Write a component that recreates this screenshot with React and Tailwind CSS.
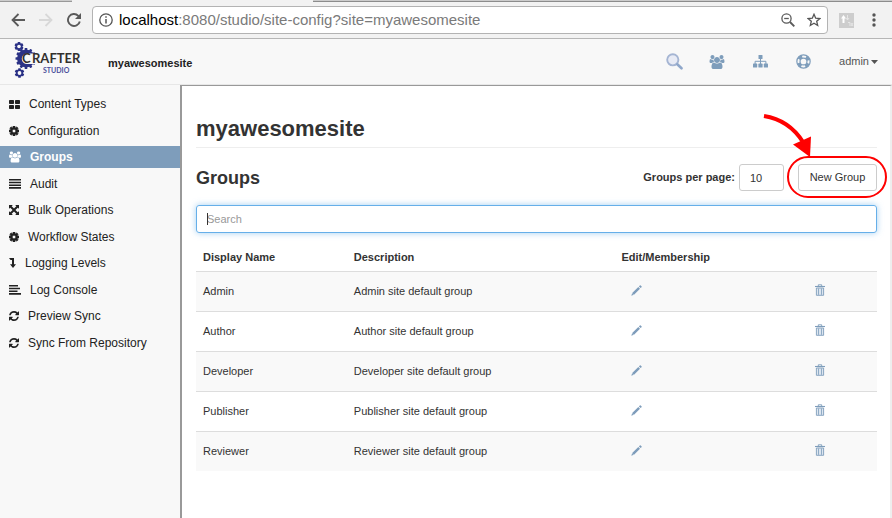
import React from 'react';

const USERS =
  'M657 896q-162 5-265 128h-134q-82 0-138-40.5t-56-118.5q0-353 124-353 6 0 43.5 21t97.5 42.5 119 21.5q67 0 133-23-5 37-5 66 0 139 81 256zm1071 637q0 120-73 189.5t-194 69.5h-874q-121 0-194-69.5t-73-189.5q0-53 3.5-103.5t14-109 26.5-108.5 43-97.5 62-81 85.5-53.5 111.5-20q10 0 43 21.5t73 48 107 48 135 21.5 135-21.5 107-48 73-48 43-21.5q61 0 111.5 20t85.5 53.5 62 81 43 97.5 26.5 108.5 14 109 3.5 103.5zm-1024-1277q0 106-75 181t-181 75-181-75-75-181 75-181 181-75 181 75 75 181zm704 384q0 159-112.5 271.5t-271.5 112.5-271.5-112.5-112.5-271.5 112.5-271.5 271.5-112.5 271.5 112.5 112.5 271.5zm576 225q0 78-56 118.5t-138 40.5h-134q-103-123-265-128 81-117 81-256 0-29-5-66 66 23 133 23 59 0 119-21.5t97.5-42.5 43.5-21q124 0 124 353zm-128-609q0 106-75 181t-181 75-181-75-75-181 75-181 181-75 181 75 75 181z';
const REFRESH =
  'M1511 928q0 5-1 7-64 268-268 434.5t-478 166.5q-146 0-282.5-55t-243.5-157l-129 129q-19 19-45 19t-45-19-19-45v-448q0-26 19-45t45-19h448q26 0 45 19t19 45-19 45l-137 137q71 66 161 102t187 36q134 0 250-65t186-179q11-17 53-117 8-23 30-23h192q13 0 22.5 9.5t9.5 22.5zm25-800v448q0 26-19 45t-45 19h-448q-26 0-45-19t-19-45 19-45l138-138q-148-137-349-137-134 0-250 65t-186 179q-11 17-53 117-8 23-30 23h-199q-13 0-22.5-9.5t-9.5-22.5v-7q65-268 270-434.5t480-166.5q146 0 284 55.5t245 156.5l130-129q19-19 45-19t45 19 19 45z';
const COG =
  'M1024 640q0-106-75-181t-181-75-181 75-75 181 75 181 181 75 181-75 75-181zm512-109v222q0 12-8 23t-20 13l-185 28q-19 54-39 91 35 50 107 138 10 12 10 25t-9 23q-27 37-99 108t-94 71q-12 0-26-9l-138-108q-44 23-91 38-16 136-29 186-7 28-36 28h-222q-14 0-24.5-8.5t-11.5-21.5l-28-184q-49-16-90-37l-141 107q-10 9-25 9-14 0-25-11-126-114-165-168-7-10-7-23 0-12 8-23 15-21 51-66.5t54-70.5q-27-50-41-99l-183-27q-13-2-21-12.5t-8-23.5v-222q0-12 8-23t19-13l186-28q14-46 39-92-40-57-107-138-10-12-10-24 0-10 9-23 26-36 98.5-107.5t94.500-71.500q13 0 26 10l138 107q44-23 91-38 16-136 29-186 7-28 36-28h222q14 0 24.5 8.5t11.5 21.5l28 184q49 16 90 37l142-107q9-9 24-9 13 0 25 10 129 119 165 170 7 8 7 22 0 12-8 23-15 21-51 66.5t-54 70.5q26 50 41 98l183 28q13 2 21 12.5t8 23.5z';

const Users = ({ className }) => (
  <svg viewBox="64 0 1920 1792" className={className} fill="currentColor" aria-hidden="true"><path d={USERS} /></svg>
);
const Refresh = ({ className }) => (
  <svg viewBox="0 0 1536 1536" className={className} fill="currentColor" aria-hidden="true"><path d={REFRESH} /></svg>
);
const Cog = ({ className }) => (
  <svg viewBox="0 -128 1536 1536" className={className} fill="currentColor" stroke="currentColor" strokeWidth="90" aria-hidden="true"><path d={COG} /></svg>
);
const ThLarge = ({ className }) => (
  <svg viewBox="0 0 11 9" className={className} fill="currentColor" aria-hidden="true">
    <rect width="5" height="4" rx="0.7" /><rect x="6" width="5" height="4" rx="0.7" />
    <rect y="5" width="5" height="4" rx="0.7" /><rect x="6" y="5" width="5" height="4" rx="0.7" />
  </svg>
);
const Justify = ({ className }) => (
  <svg viewBox="0 0 12 11" className={className} fill="currentColor" aria-hidden="true">
    <path d="M0 1h12v1.6H0zM0 3.7h12v1.6H0zM0 6.4h12V8H0zM0 9.1h12v1.6H0z" />
  </svg>
);
const AlignLeft = ({ className }) => (
  <svg viewBox="0 0 12 11" className={className} fill="currentColor" aria-hidden="true">
    <path d="M0 1h9v1.6H0zM0 3.7h11v1.6H0zM0 6.4h8.5V8H0zM0 9.1h12v1.6H0z" />
  </svg>
);
const Expand = ({ className }) => (
  <svg viewBox="0 0 12 12" className={className} fill="currentColor" aria-hidden="true">
    <path d="M0 0h4.6L3.2 1.5 6 4.3l2.8-2.8L7.400 0H12v4.600l-1.500-1.400L7.700 6l2.800 2.800L12 7.400V12H7.400l1.400-1.500L6 7.700l-2.800 2.800L4.600 12H0V7.400l1.500 1.400L4.300 6 1.500 3.200 0 4.600z" />
  </svg>
);
const LevelDown = ({ className }) => (
  <svg viewBox="0 0 7 10" className={className} fill="currentColor" aria-hidden="true">
    <path d="M0 0h5v6.200h2L4 10 1 6.200h2V2H1.500z" />
  </svg>
);
const Sitemap = ({ className }) => (
  <svg viewBox="0 0 15 13" className={className} fill="currentColor" aria-hidden="true">
    <rect x="5.5" y="0" width="4" height="4" rx="0.6" />
    <rect x="0" y="8.6" width="4.2" height="4" rx="0.6" />
    <rect x="5.4" y="8.6" width="4.2" height="4" rx="0.6" />
    <rect x="10.8" y="8.6" width="4.2" height="4" rx="0.6" />
    <path d="M7.500 3.500v5.500M2.100 9V6.300h10.800V9" fill="none" stroke="currentColor" strokeWidth="1" />
  </svg>
);
const LifeRing = ({ className }) => (
  <svg viewBox="0 0 16 16" className={className} fill="none" stroke="currentColor" aria-hidden="true">
    <circle cx="8" cy="8" r="7.1" strokeWidth="1.3" />
    <circle cx="8" cy="8" r="3.7" strokeWidth="1.3" />
    <circle cx="8" cy="8" r="5.4" strokeWidth="3.2" strokeDasharray="4.24 4.24" strokeDashoffset="-2.12" />
  </svg>
);
const Magnifier = ({ className }) => (
  <svg viewBox="0 0 17 17" className={className} fill="none" aria-hidden="true">
    <circle cx="6.8" cy="6.8" r="5.6" strokeWidth="1.9" stroke="#a5b5d3" fill="#e8ebf5" />
    <path d="M11.300 11.300l4.200 4" stroke="#8fa7ca" strokeWidth="2.6" strokeLinecap="round" />
  </svg>
);
const Pencil = ({ className }) => (
  <svg viewBox="0 0 11 11" className={className} fill="currentColor" aria-hidden="true">
    <path d="M0.300 10.700l.9-2.700L7.300 2l1.700 1.700L3 9.800zM7.900 1.400l.9-.9q.4-.4.900 0l.8.8q.5.500 0 1l-.9.800z" />
    <path d="M1.200 8.300l1.500 1.500" stroke="white" strokeWidth="0.5" />
  </svg>
);
const Trash = ({ className }) => (
  <svg viewBox="0 0 10 12" className={className} fill="none" stroke="currentColor" aria-hidden="true">
    <path d="M0 2.500h10" strokeWidth="1.1" />
    <path d="M3.300 2.300V.8h3.400v1.500" strokeWidth="0.9" />
    <path d="M1.400 4h7.200v7.300H1.400z" fill="#dce5ef" strokeWidth="0.9" />
    <path d="M3.500 4.500v6.300M6.500 4.500v6.300" strokeWidth="0.8" />
  </svg>
);

const gear = (cx, cy, r, teeth, w) =>
  Array.from({ length: teeth }, (_, i) => (
    <rect key={i} x={cx - w / 2} y={cy - r} width={w} height={r} rx="0.5" transform={`rotate(${(360 / teeth) * i} ${cx} ${cy})`} />
  ));

const Logo = () => (
  <svg viewBox="0 0 68 40" className="h-10 w-[68px]" role="img" aria-label="Crafter Studio">
    <g fill="#2b3286">
      {gear(12, 16.5, 10.5, 12, 2.6)}
      <circle cx="12" cy="16.5" r="9" />
      {gear(5, 4.5, 4.5, 6, 2.6)}
      <circle cx="5" cy="4.5" r="3.5" />
      {gear(5.5, 31, 4.8, 6, 2.6)}
      <circle cx="5.5" cy="31" r="3.7" />
    </g>
    <circle cx="5" cy="4.5" r="1.8" fill="#f8f8f8" />
    <circle cx="5.5" cy="31" r="1.9" fill="#f8f8f8" />
    <path d="M13 11.500h12V22H13a5.200 5.200 0 0 1 0-10.500z" fill="#f8f8f8" />
    <g fontWeight="700" fontFamily="Lato, sans-serif">
      <text x="8" y="21" fontSize="13" fill="#33302e">C</text>
      <text x="18" y="21" fontSize="13" fill="#33302e">RAFTER</text>
      <text x="29" y="31" fontSize="7" fill="#4b4f9b">STUDIO</text>
    </g>
  </svg>
);

const nav = [
  ['Content Types', ThLarge, 'h-[9px] w-[11px]'],
  ['Configuration', Cog, 'size-[10px]'],
  ['Groups', Users, 'h-3 w-3'],
  ['Audit', Justify, 'h-[11px] w-3'],
  ['Bulk Operations', Expand, 'size-[10px]'],
  ['Workflow States', Cog, 'size-[10px]'],
  ['Logging Levels', LevelDown, 'h-[10px] w-[7px]'],
  ['Log Console', AlignLeft, 'h-[11px] w-3'],
  ['Preview Sync', Refresh, 'size-[10px]'],
  ['Sync From Repository', Refresh, 'size-[10px]'],
];

const groups = ['Admin', 'Author', 'Developer', 'Publisher', 'Reviewer'];

function BrowserBar() {
  return (
    <div className="border-b border-[#b6b6b6] bg-[#f2f2f2]">
      <div className="flex h-[2px]">
        <div className="w-[72px] border-b border-[#999] bg-[#ccc]" />
        <div className="w-[241px]" />
        <div className="flex-1 border-b border-[#8c8c8c] bg-[#ccc]" />
      </div>
      <div className="flex h-9 items-center">
        <div className="flex items-center gap-[14px] pl-[11px] text-[#5a5a5a]">
          <button aria-label="Back" className="block">
            <svg viewBox="0 0 14 14" className="size-[14px]" fill="none" stroke="currentColor" strokeWidth="1.8"><path d="M14 7H1.500M7.500 1L1.500 7l6 6" /></svg>
          </button>
          <button aria-label="Forward" className="block text-[#d8d8d8]">
            <svg viewBox="0 0 14 14" className="size-[14px]" fill="none" stroke="currentColor" strokeWidth="1.8"><path d="M0 7h12.500M6.500 1l6 6-6 6" /></svg>
          </button>
          <button aria-label="Reload" className="block">
            <svg viewBox="0 0 14 14" className="size-[14px]" fill="none" stroke="currentColor" strokeWidth="1.9">
              <path d="M12.800 8.400A6 6 0 1 1 11.300 2.800L12.500 4" /><path d="M14 0v6H8z" fill="currentColor" stroke="none" />
            </svg>
          </button>
        </div>
        <div className="ml-[11px] flex h-7 flex-1 items-center rounded-sm border border-[#b3b3b3] bg-white px-[6px]">
          <svg viewBox="0 0 14 14" className="size-[14px]" fill="none" stroke="#555" strokeWidth="1.3" aria-hidden="true">
            <circle cx="7" cy="7" r="6.2" /><path d="M7 6v4.500M7 3.300v1.500" strokeWidth="1.5" />
          </svg>
          <div className="ml-[6px] flex-1 text-[15px] leading-5 text-[#7a7a7a]">
            <span className="text-black">localhost</span>:8080/studio/site-config?site=myawesomesite
          </div>
          <button aria-label="Zoom out" className="mr-3">
            <svg viewBox="0 0 14 14" className="size-[14px]" fill="none" stroke="#5a5a5a" strokeWidth="1.3">
              <circle cx="5.5" cy="5.5" r="4.6" /><path d="M3.200 5.500h4.600" /><path d="M9 9l4.300 4.300" strokeWidth="1.9" />
            </svg>
          </button>
          <button aria-label="Bookmark">
            <svg viewBox="0 0 14 14" className="size-[14px]" fill="none" stroke="#555" strokeWidth="1.3">
              <path d="M7 1.300l1.700 3.900 4.200.3-3.200 2.800 1 4.200L7 10.300l-3.700 2.200 1-4.200L1.100 5.500l4.200-.3z" />
            </svg>
          </button>
        </div>
        <div className="flex items-center gap-[18px] pr-4 pl-[11px]">
          <svg viewBox="0 0 15 15" className="size-[15px]" aria-hidden="true">
            <path d="M0 0h15v15H0z" fill="#cdcdcd" /><path d="M2 5.500L4.500 2 7 5.500H5.500V10h-2V5.500z" fill="#fff" />
            <path d="M8.500 2v5M7 5l1.500 2L10 5M9 9.500h2v3.500M12 10l2 3M14 10l-2 3" fill="none" stroke="#e6e6e6" />
          </svg>
          <svg viewBox="0 0 4 14" className="h-[14px] w-1" fill="#555" aria-hidden="true">
            <circle cx="2" cy="2" r="1.7" /><circle cx="2" cy="7" r="1.7" /><circle cx="2" cy="12" r="1.7" />
          </svg>
        </div>
      </div>
    </div>
  );
}

function Header() {
  return (
    <header className="flex h-[46px] items-center border-b border-[#e7e7e7] bg-[#f8f8f8] px-[14px]">
      <div className="w-[94px]"><Logo /></div>
      <a href="#site" className="flex-1 pt-1 text-[11px] font-bold text-[#222]">myawesomesite</a>
      <div className="flex items-center text-[#7e9dbb]">
        <button aria-label="Search" className="mr-[26px]"><Magnifier className="size-[17px]" /></button>
        <button aria-label="Users" className="mr-7"><Users className="h-[14px] w-4" /></button>
        <button aria-label="Sites" className="mr-7"><Sitemap className="h-[13px] w-[15px]" /></button>
        <button aria-label="Help" className="mr-7"><LifeRing className="size-[15px]" /></button>
        <button className="flex items-center gap-[2px] text-[11px] text-[#555]">
          admin
          <svg viewBox="0 0 7 4" className="h-1 w-[7px]" fill="currentColor" aria-hidden="true"><path d="M0 0h7L3.500 4z" /></svg>
        </button>
      </div>
    </header>
  );
}

function Sidebar() {
  return (
    <nav className="w-[180px] shrink-0 bg-[#f8f8f8] pt-2">
      <ul className="flex h-[261px] flex-col justify-between">
        {nav.map(([label, Icon, size]) => (
          <li key={label}>
            <a
              href="#nav"
              className={
                label === 'Groups'
                  ? 'flex h-[22px] items-center gap-[9px] bg-[#7e9dbb] pl-[9px] text-[12px] font-bold text-white'
                  : 'flex h-[22px] items-center gap-[9px] pl-[9px] text-[12px] text-[#222]'
              }
            >
              <Icon className={size} />
              {label}
            </a>
          </li>
        ))}
      </ul>
    </nav>
  );
}

export default function App() {
  return (
    <div className="flex min-h-screen flex-col bg-white font-['Liberation_Sans',Arial,sans-serif] text-[#333]">
      <BrowserBar />
      <Header />
      <div className="flex flex-1">
        <Sidebar />
        <main className="flex-1 border-t border-r-2 border-l-2 border-t-[#999] border-r-[#eee] border-l-[#999] pr-[13px] pl-[14px] text-[11px]">
          <h1 className="mt-[29px] border-b border-[#eee] pb-1 text-[22px] leading-7 font-bold">myawesomesite</h1>
          <div className="mt-4 flex items-center">
            <h2 className="flex-1 text-[18px] leading-6 font-bold">Groups</h2>
            <label htmlFor="per-page" className="mr-1 font-bold">Groups per page:</label>
            <input id="per-page" defaultValue="10" className="h-[27px] w-[45px] rounded-[3px] border border-[#ccc] px-[10px] text-[11px]" />
            <div className="relative ml-[14px]">
              <button className="block h-[27px] w-[79px] rounded-[3px] border border-[#ccc] bg-white text-[11px]">New Group</button>
              <svg viewBox="0 0 128 90" className="pointer-events-none absolute -top-[52px] -left-[36px] h-[90px] w-[128px]" fill="none" stroke="#ff0000" aria-hidden="true">
                <rect x="26" y="45" width="98" height="40" rx="20" strokeWidth="2" />
                <path d="M2 4Q27 8 41 30" strokeWidth="4" />
                <path d="M31 32.500L49 24.500 48 45z" fill="#ff0000" stroke="none" />
              </svg>
            </div>
          </div>
          <div className="relative mt-[14px]">
            <input
              aria-label="Search groups"
              placeholder="Search"
              className="block h-7 w-full rounded-[3px] border border-[#66afe9] px-[10px] text-[11px] shadow-[0_0_6px_rgba(102,175,233,0.6)] outline-none placeholder:text-[#999]"
            />
            <span className="pointer-events-none absolute top-2 left-[11px] h-3 w-px bg-[#333]" />
          </div>
          <table className="mt-[10px] w-full table-fixed text-left">
            <colgroup>
              <col className="w-[22%]" />
              <col className="w-[39%]" />
              <col className="w-[29%]" />
              <col className="w-[10%]" />
            </colgroup>
            <thead>
              <tr className="h-7">
                <th className="px-[7px]">Display Name</th>
                <th className="px-2">Description</th>
                <th className="px-[10px]">Edit/Membership</th>
                <th aria-label="Delete" />
              </tr>
            </thead>
            <tbody>
              {groups.map((name) => (
                <tr key={name} className="h-10 border-t border-[#ddd] odd:bg-[#f9f9f9]">
                  <td className="px-[7px]">{name}</td>
                  <td className="px-2">{name} site default group</td>
                  <td className="px-5 pb-[2px] text-[#7e9dbb]">
                    <button aria-label={`Edit ${name}`} className="block"><Pencil className="size-[11px]" /></button>
                  </td>
                  <td className="px-[6px] pb-[2px] text-[#7e9dbb]">
                    <button aria-label={`Delete ${name}`} className="block"><Trash className="h-3 w-[10px]" /></button>
                  </td>
                </tr>
              ))}
            </tbody>
          </table>
        </main>
      </div>
    </div>
  );
}
